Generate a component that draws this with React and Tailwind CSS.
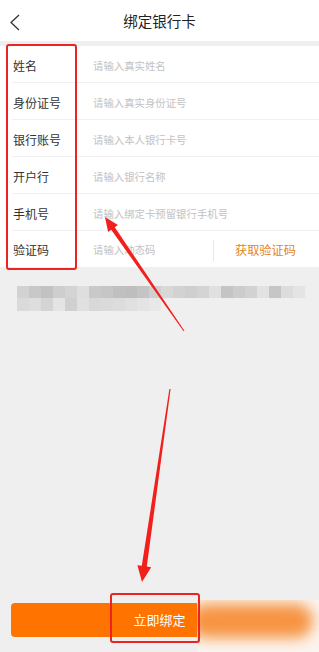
import React from 'react'

const rows = [
  { label: '姓名', ph: '请输入真实姓名' },
  { label: '身份证号', ph: '请输入真实身份证号' },
  { label: '银行账号', ph: '请输入本人银行卡号' },
  { label: '开户行', ph: '请输入银行名称' },
  { label: '手机号', ph: '请输入绑定卡预留银行手机号' },
]

const blur1 = ['#d2d2d2', '#c8c8c8', '#c2c2c2', '#cecece', '#d4d4d4', '#dedede', '#c9c9c9', '#c6c6c6', '#c0c0c0', '#bebebe', '#c4c4c4', '#d0d0d0', '#d8d8d8', '#d2d2d2', '#cfcfcf', '#d4d4d4', '#e0e0e0', '#c4c4c4', '#cccccc', '#d2d2d2', '#e2e2e2', '#c6c6c6', '#dcdcdc', '#e4e4e4']
const blur2 = ['#dadada', '#dedede', '#d4d4d4', '#e4e4e4', '#d0d0d0', '#e0e0e0', '#d8d8d8', '#dadada', '#dcdcdc', '#e0e0e0', '#e4e4e4', '#e8e8e8']

export default function App() {
  return (
    <div className="relative h-[652px] w-[319px] overflow-hidden bg-[#efefef] flex flex-col" style={{ fontFamily: '"Noto Sans CJK SC", "Noto Sans", sans-serif' }}>
      {/* header */}
      <div className="relative flex h-[41px] items-center justify-center bg-white">
        <svg className="absolute left-[9px] top-[14px]" width="12" height="17" viewBox="0 0 12 17">
          <path d="M10 1 L2 8.5 L10 16" fill="none" stroke="#333" strokeWidth="1.3" />
        </svg>
        <span className="text-[14.5px] text-[#222]">绑定银行卡</span>
      </div>

      {/* form */}
      <div className="mt-[5px] bg-white pl-[12px]">
        {rows.map((r) => (
          <div key={r.label} className="flex h-[37px] items-center border-b border-[#f0f0f0] pt-[3px]">
            <span className="w-[81px] pl-[1px] text-[12px] text-[#333]">{r.label}</span>
            <span className="text-[10.4px] text-[#c2c2c2]">{r.ph}</span>
          </div>
        ))}
        <div className="flex h-[36px] items-center pt-[2px]">
          <span className="w-[81px] pl-[1px] text-[12px] text-[#333]">验证码</span>
          <span className="w-[120px] text-[10.4px] text-[#c2c2c2]">请输入动态码</span>
          <div className="h-[21px] w-px bg-[#e6e6e6]" />
          <span className="ml-[21px] text-[12.2px] text-[#e2841f]">获取验证码</span>
        </div>
      </div>

      {/* blurred notice */}
      <div className="mt-[19px] pl-[17px]">
        <div className="flex">
          {blur1.map((c, i) => (
            <div key={i} className="h-[12px] w-[12px]" style={{ background: c }} />
          ))}
        </div>
        <div className="flex">
          {blur2.map((c, i) => (
            <div key={i} className="h-[13px] w-[12px]" style={{ background: c }} />
          ))}
        </div>
      </div>

      <div className="flex-1" />

      {/* button */}
      <div className="mb-[15px] px-[11px]">
        <div className="flex h-[34px] items-center justify-center rounded-[4px] bg-[#ff7300] text-[13px] text-white">
          立即绑定
        </div>
      </div>

      {/* watermark blur */}
      <div className="absolute left-[197px] top-[600px] h-[52px] w-[122px] overflow-hidden bg-[#fbf4ee]">
        <div className="absolute left-[-8px] top-[4px] h-[34px] w-[124px] rounded-full bg-[#f68a30] opacity-90 blur-[7px]" />
      </div>

      {/* annotations */}
      <div className="absolute left-[6px] top-[44px] h-[226px] w-[71px] rounded-[3px] border-2 border-[#ec2320]" />
      <div className="absolute left-[110px] top-[593px] h-[50px] w-[90px] rounded-[3px] border-2 border-[#ec2320]" />
      <svg className="absolute left-0 top-0" width="319" height="652" viewBox="0 0 319 652">
        <polygon fill="#f2201c" points="105,217 117.9,225.1 114.8,227.2 184.4,330.7 183.6,331.3 111.2,229.8 108.1,231.9" />
        <polygon fill="#f2201c" points="142,582 151.2,567.2 146.8,566.6 170.6,389.1 169.4,388.9 141.8,565.8 137.4,565.2" />
      </svg>
    </div>
  )
}
